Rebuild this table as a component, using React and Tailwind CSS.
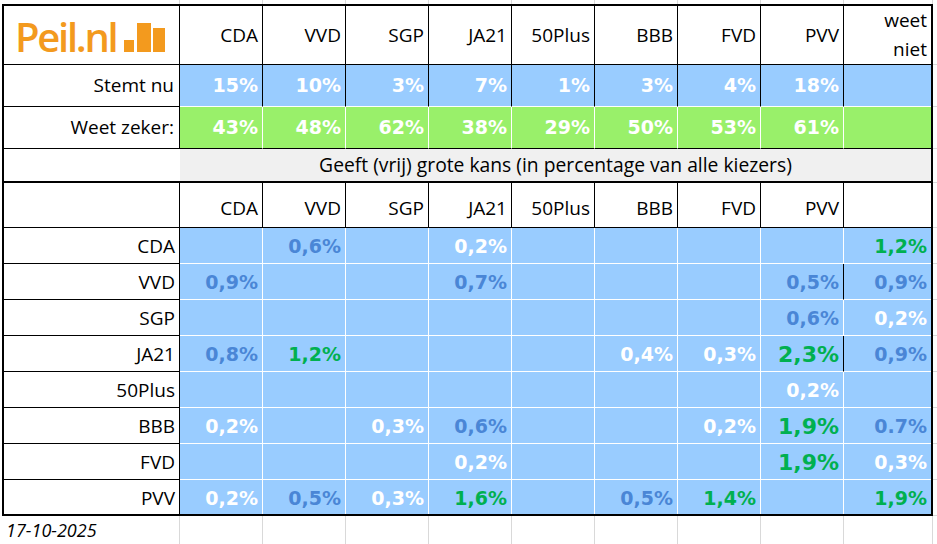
import clsx from 'clsx'

const PARTIES = ['CDA', 'VVD', 'SGP', 'JA21', '50Plus', 'BBB', 'FVD', 'PVV']
const STEMT = ['15%', '10%', '3%', '7%', '1%', '3%', '4%', '18%', '']
const ZEKER = ['43%', '48%', '62%', '38%', '29%', '50%', '53%', '61%', '']

// b = blauw, w = wit, g = groen, G = groen groot
const MATRIX = [
  ['CDA', ['', 'b0,6%', '', 'w0,2%', '', '', '', '', 'g1,2%']],
  ['VVD', ['b0,9%', '', '', 'b0,7%', '', '', '', 'b0,5%', 'b0,9%']],
  ['SGP', ['', '', '', '', '', '', '', 'b0,6%', 'w0,2%']],
  ['JA21', ['b0,8%', 'g1,2%', '', '', '', 'w0,4%', 'w0,3%', 'G2,3%', 'b0,9%']],
  ['50Plus', ['', '', '', '', '', '', '', 'w0,2%', '']],
  ['BBB', ['w0,2%', '', 'w0,3%', 'b0,6%', '', '', 'w0,2%', 'G1,9%', 'b0.7%']],
  ['FVD', ['', '', '', 'w0,2%', '', '', '', 'G1,9%', 'w0,3%']],
  ['PVV', ['w0,2%', 'b0,5%', 'w0,3%', 'g1,6%', '', 'b0,5%', 'g1,4%', '', 'g1,9%']],
]

const TONE = {
  b: 'text-[#4a86d6] text-[19px]',
  w: 'text-white text-[19px]',
  g: 'text-[#00b050] text-[19px]',
  G: 'text-[#00b050] text-[22px]',
}

const ROW = 'grid grid-cols-[176px_repeat(8,83px)_87px]'
const NUM = "font-['DejaVu_Sans',sans-serif] font-bold"

function Cell({ className, children }) {
  return (
    <div className={clsx('flex items-center justify-end pr-[4px] whitespace-nowrap', className)}>
      {children}
    </div>
  )
}

function Logo() {
  return (
    <div className="flex items-baseline">
      <span className="text-[40px] leading-none font-semibold tracking-[-2.3px] text-[#f39a1e]">Peil.nl</span>
      <svg width="41" height="29" viewBox="0 0 41 29" className="ml-[8px]">
        <rect x="0" y="17" width="10" height="12" fill="#f39a1e" />
        <rect x="13" y="0" width="14" height="29" fill="#f39a1e" />
        <rect x="29" y="5" width="12" height="24" fill="#f39a1e" />
      </svg>
    </div>
  )
}

function GridStrip({ className, children }) {
  return (
    <div className={clsx('grid grid-cols-[180px_repeat(8,83px)_89px_1fr]', className)}>
      <div className="border-r border-[#d9d9d9] flex items-center pl-[6px]">{children}</div>
      {Array.from({ length: 9 }).map((_, i) => (
        <div key={i} className="border-r border-[#d9d9d9]" />
      ))}
      <div />
    </div>
  )
}

export default function App() {
  return (
    <div className="w-[937px] h-[544px] bg-white overflow-hidden font-['Open_Sans',sans-serif] text-black text-[19px]">
      <GridStrip className="h-[4px]" />

      <div className="flex">
        <div className="ml-[2px] w-[931px] border-2 border-black">
          {/* kop */}
          <div className={ROW}>
            <Cell className="h-[59px] border-r border-b border-black justify-start pl-[11px] pt-[4px]">
              <Logo />
            </Cell>
            {PARTIES.map((p) => (
              <Cell key={p} className="h-[59px] border-r border-b border-black">
                {p}
              </Cell>
            ))}
            <Cell className="h-[59px] border-b border-black">
              <div className="text-right leading-[29px]">
                weet
                <br />
                niet
              </div>
            </Cell>
          </div>

          {/* stemt nu */}
          <div className={ROW}>
            <Cell className="h-[42px] border-r border-b border-black pr-[5px]">Stemt nu</Cell>
            {STEMT.map((v, i) => (
              <Cell
                key={i}
                className={clsx(
                  'h-[42px] bg-[#99ccff] border-b border-white text-white',
                  NUM,
                  i < 8 && 'border-r border-r-black'
                )}
              >
                {v}
              </Cell>
            ))}
          </div>

          {/* weet zeker */}
          <div className={ROW}>
            <Cell className="h-[42px] border-r border-b border-black pr-[5px]">Weet zeker:</Cell>
            {ZEKER.map((v, i) => (
              <Cell
                key={i}
                className={clsx(
                  'h-[42px] bg-[#99f06a] border-b border-black text-white',
                  NUM,
                  i < 8 && 'border-r border-r-white'
                )}
              >
                {v}
              </Cell>
            ))}
          </div>

          {/* titel */}
          <div className={ROW}>
            <div className="h-[34px] border-b-2 border-black" />
            <div className="col-span-9 h-[34px] bg-[#f0f0f0] border-b-2 border-black flex items-center justify-center whitespace-nowrap text-[19.3px]">
              Geeft (vrij) grote kans (in percentage van alle kiezers)
            </div>
          </div>

          {/* kop 2 */}
          <div className={ROW}>
            <Cell className="h-[45px] border-r border-b border-black" />
            {PARTIES.map((p) => (
              <Cell key={p} className="h-[45px] border-r border-b border-black pt-[6px]">
                {p}
              </Cell>
            ))}
            <Cell className="h-[45px] border-b border-black" />
          </div>

          {/* matrix */}
          {MATRIX.map(([label, vals], r) => {
            const last = r === MATRIX.length - 1
            return (
              <div key={label} className={ROW}>
                <Cell
                  className={clsx(
                    'border-r border-black pt-[2px]',
                    last ? 'h-[34px]' : 'h-[36px] border-b'
                  )}
                >
                  {label}
                </Cell>
                {vals.map((v, i) => (
                  <Cell
                    key={i}
                    className={clsx(
                      'bg-[#99ccff] pt-[2px]',
                      NUM,
                      last ? 'h-[34px]' : 'h-[36px] border-b border-b-white',
                      i < 8 && 'border-r',
                      i < 8 && (i === 7 && (label === 'VVD' || label === 'JA21') ? 'border-r-black' : 'border-r-white'),
                      v && TONE[v[0]]
                    )}
                  >
                    {v.slice(1)}
                  </Cell>
                ))}
              </div>
            )
          })}
        </div>

        {/* rasterlijnen rechts */}
        <div className="flex-1 flex flex-col">
          <div className="h-[61px] border-b border-[#d9d9d9]" />
          <div className="h-[42px] border-b border-[#d9d9d9]" />
          <div className="h-[42px] border-b border-[#d9d9d9]" />
          <div className="h-[34px] border-b border-[#d9d9d9]" />
          <div className="h-[45px] border-b border-[#d9d9d9]" />
          {MATRIX.map(([label]) => (
            <div key={label} className="h-[36px] border-b border-[#d9d9d9]" />
          ))}
        </div>
      </div>

      <GridStrip className="h-[28px]">
        <span className="italic text-[18px]">17-10-2025</span>
      </GridStrip>
    </div>
  )
}
